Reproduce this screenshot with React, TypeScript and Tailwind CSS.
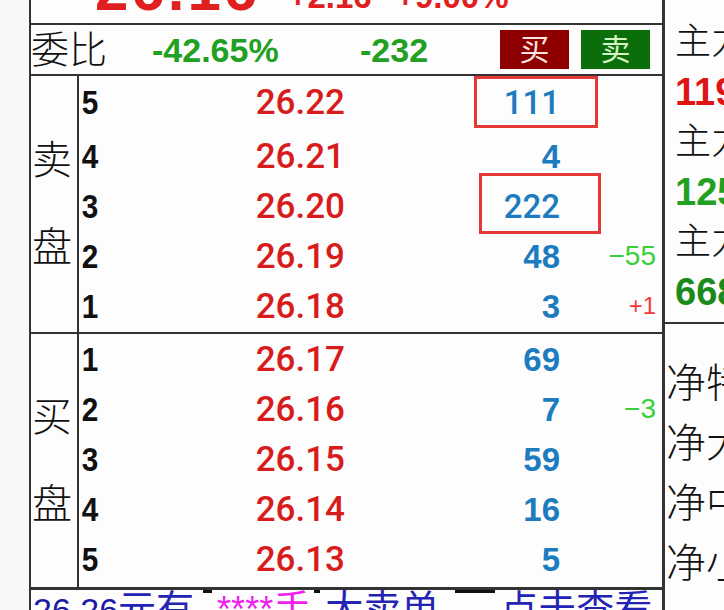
import React from 'react';

type Level = {
  lv: number;
  price: string;
  vol: string;
  boxed?: 'a' | 'b';
  chg?: string;
  up?: boolean;
};

const sellLevels: Level[] = [
  { lv: 5, price: '26.22', vol: '111', boxed: 'a' },
  { lv: 4, price: '26.21', vol: '4' },
  { lv: 3, price: '26.20', vol: '222', boxed: 'b' },
  { lv: 2, price: '26.19', vol: '48', chg: '−55', up: false },
  { lv: 1, price: '26.18', vol: '3', chg: '+1', up: true },
];

const buyLevels: Level[] = [
  { lv: 1, price: '26.17', vol: '69' },
  { lv: 2, price: '26.16', vol: '7', chg: '−3', up: false },
  { lv: 3, price: '26.15', vol: '59' },
  { lv: 4, price: '26.14', vol: '16' },
  { lv: 5, price: '26.13', vol: '5' },
];

const font = "font-['Liberation_Sans','Noto_Sans_CJK_SC',sans-serif]";
const roboto = "font-['Roboto','Liberation_Sans',sans-serif]";

const QuoteRow: React.FC<{ row: Level; className?: string }> = ({ row, className = '' }) => (
  <div className={`flex items-center h-[50px] shrink-0 ${className}`}>
    {/* level number */}
    <div className="w-[30px] pl-[3px] text-[33px] font-bold leading-none text-[#111] scale-x-[0.9] origin-left">{row.lv}</div>
    {/* price */}
    <div className={`w-[236px] text-right text-[35px] leading-none font-medium text-[#d81c1c] ${roboto}`}>{row.price}</div>
    {/* volume */}
    <div className="relative w-[215px] h-full flex items-center justify-end">
      <span className={`text-[33px] leading-none text-[#1d7cc0] ${row.boxed ? `font-medium ${roboto}` : 'font-bold'}`}>
        {row.vol}
      </span>
      {row.boxed === 'a' && (
        <div className="absolute left-[129px] top-[-1px] w-[124px] h-[52px] border-[3px] border-[#e53935]" />
      )}
      {row.boxed === 'b' && (
        <div className="absolute left-[134px] top-[-8px] w-[122px] h-[61px] border-[3px] border-[#e53935]" />
      )}
    </div>
    {/* change */}
    <div className="w-[96px] text-right leading-none">
      {row.chg && (
        <span className={row.up ? 'text-[24px] text-[#f03a3a]' : 'text-[28px] text-[#3ccf3c]'}>{row.chg}</span>
      )}
    </div>
  </div>
);

const SideLabel: React.FC<{ top: string; bottom: string }> = ({ top, bottom }) => (
  <div className="w-[48px] shrink-0 border-r-2 border-[#333] flex flex-col items-center justify-center gap-[44px] text-[40px] leading-[43px] font-light text-[#111] pr-[4px]">
    <span>{top}</span>
    <span>{bottom}</span>
  </div>
);

export default function App() {
  return (
    <div className={`w-[724px] h-[610px] overflow-hidden flex bg-[#f8f8f8] ${font}`}>
      {/* left margin */}
      <div className="w-[29px] shrink-0" />

      {/* order book panel */}
      <div className="w-[636px] shrink-0 h-full flex flex-col bg-[#fdfdfd] border-l-2 border-r-[3px] border-[#333]">
        {/* price header (cut off at top) */}
        <div className="h-[25px] shrink-0 border-b-2 border-[#333] overflow-hidden flex items-start text-[#e02020] leading-none">
          <span className="ml-[64px] mt-[-40px] text-[60px] font-bold tracking-[3px]">26.16</span>
          <span className="ml-[28px] mt-[-20px] text-[33px] font-bold">+2.16</span>
          <span className="ml-[24px] mt-[-20px] text-[33px] font-bold">+9.00%</span>
        </div>

        {/* 委比 row */}
        <div className="h-[51px] shrink-0 border-b-2 border-[#333] flex items-center">
          <div className="w-[121px] text-[38px] leading-none font-light text-[#111]">委比</div>
          <div className="w-[208px] text-[34px] leading-none font-bold text-[#22a022]">-42.65%</div>
          <div className="text-[34px] leading-none font-bold text-[#22a022]">-232</div>
          <div className="ml-auto mr-[12px] flex gap-[12px]">
            <div className="w-[69px] h-[39px] bg-[#8e0000] flex items-center justify-center text-[30px] leading-none text-[#fbe4e4]">
              买
            </div>
            <div className="w-[69px] h-[39px] bg-[#0b6e0b] flex items-center justify-center text-[30px] leading-none text-[#d2f6c4]">
              卖
            </div>
          </div>
        </div>

        {/* sell side */}
        <div className="h-[258px] shrink-0 border-b-2 border-[#333] flex">
          <SideLabel top="卖" bottom="盘" />
          <div className="flex flex-col">
            {sellLevels.map((row, i) => (
              <QuoteRow key={row.lv} row={row} className={i === 0 ? 'mt-[1px] mb-[4px]' : ''} />
            ))}
          </div>
        </div>

        {/* buy side */}
        <div className="h-[256px] shrink-0 border-b-[3px] border-[#333] flex">
          <SideLabel top="买" bottom="盘" />
          <div className="flex flex-col">
            {buyLevels.map((row) => (
              <QuoteRow key={row.lv} row={row} />
            ))}
          </div>
        </div>

        {/* big order notice */}
        <div className="flex-1 flex items-baseline pl-[2px] leading-none whitespace-nowrap overflow-hidden">
          <span className="text-[34px] text-[#1c1ca6]">26.26</span>
          <span className="text-[38px] text-[#2424b4]">元有</span>
          <span className="self-start w-[23px] shrink-0">
            <span className="block ml-[9px] w-[9px] h-[3px] bg-[#111]" />
          </span>
          <span className="text-[36px] text-[#f020f0]">****</span>
          <span className="text-[38px] text-[#f020f0]">手</span>
          <span className="self-start w-[14px] shrink-0">
            <span className="block ml-[3px] w-[6px] h-[3px] bg-[#111]" />
          </span>
          <span className="text-[38px] text-[#2424b4]">大卖单</span>
          <span className="self-start w-[61px] shrink-0">
            <span className="block ml-[16px] w-[40px] h-[3px] bg-[#111]" />
          </span>
          <span className="text-[38px] text-[#2424b4]">点击查看</span>
        </div>
      </div>

      {/* capital flow panel (cut off at right) */}
      <div className="flex-1 h-full flex flex-col bg-[#fdfdfd] overflow-hidden whitespace-nowrap">
        <div className="h-[324px] shrink-0 border-b-2 border-[#333] pt-[17px] pl-[10px] flex flex-col">
          <div className="h-[50px] flex items-center text-[36px] leading-none font-light text-[#111]">主力买入</div>
          <div className="h-[50px] flex items-center text-[38px] leading-none font-bold text-[#dd1515]">1195</div>
          <div className="h-[50px] flex items-center text-[36px] leading-none font-light text-[#111]">主力卖出</div>
          <div className="h-[50px] flex items-center text-[38px] leading-none font-bold text-[#22a022]">1257</div>
          <div className="h-[50px] flex items-center text-[36px] leading-none font-light text-[#111]">主力净额</div>
          <div className="h-[50px] flex items-center text-[38px] leading-none font-bold text-[#1a8a1a]">6683</div>
        </div>
        <div className="flex-1 pt-[29px] pl-[1px] flex flex-col">
          {['净特大', '净大单', '净中单', '净小单'].map((t) => (
            <div key={t} className="h-[60px] shrink-0 flex items-center text-[40px] leading-none font-light text-[#111]">
              {t}
            </div>
          ))}
        </div>
      </div>
    </div>
  );
}
